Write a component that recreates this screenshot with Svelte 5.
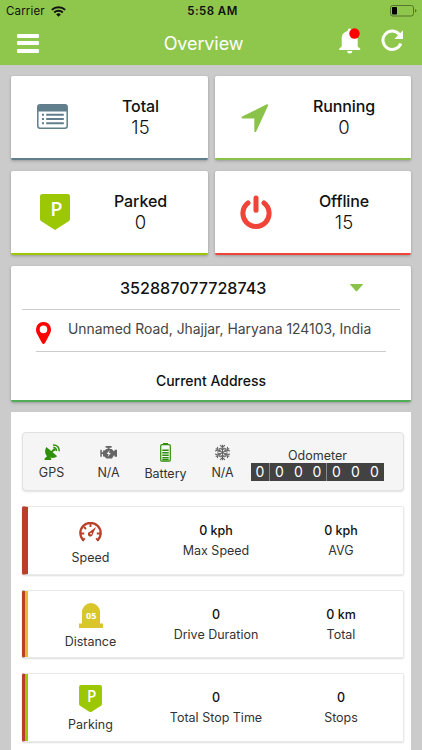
<script lang="ts">
	const tiles = [
		{ icon: 'list', label: 'Total', value: 15, tone: 'slate' },
		{ icon: 'arrow', label: 'Running', value: 0, tone: 'green' },
		{ icon: 'parking', label: 'Parked', value: 0, tone: 'lime' },
		{ icon: 'power', label: 'Offline', value: 15, tone: 'red' }
	];

	const sensors = [
		{ icon: 'gps', label: 'GPS' },
		{ icon: 'engine', label: 'N/A' },
		{ icon: 'battery', label: 'Battery' },
		{ icon: 'snow', label: 'N/A' }
	];

	const odometer = [0, 0, 0, 0, 0, 0, 0];

	const stats = [
		{
			icon: 'speed',
			label: 'Speed',
			values: [
				{ value: '0 kph', label: 'Max Speed' },
				{ value: '0 kph', label: 'AVG' }
			]
		},
		{
			icon: 'distance',
			label: 'Distance',
			values: [
				{ value: '0', label: 'Drive Duration' },
				{ value: '0 km', label: 'Total' }
			]
		},
		{
			icon: 'parking',
			label: 'Parking',
			values: [
				{ value: '0', label: 'Total Stop Time' },
				{ value: '0', label: 'Stops' }
			]
		}
	];
</script>

{#snippet parkingSign(width: number, height: number)}
	<svg {width} {height} viewBox="0 0 30 36">
		<path d="M2.5 0h25A2.5 2.5 0 0130 2.500V25q0 1.500-1.300 2.300L15 36 1.300 27.300Q0 26.500 0 25V2.500A2.500 2.500 0 012.500 0z" fill="#9bc704" />
		<text x="16.500" y="22" text-anchor="middle" class="sign-letter">P</text>
	</svg>
{/snippet}

<div class="app">
	<header>
		<div class="status-bar">
			<div class="carrier">
				<span>Carrier</span>
				<!-- WiFi -->
				<svg width="15" height="11" viewBox="0 0 15 11" fill="none" stroke="#111">
					<path d="M.8 3.900a9.600 9.600 0 0113.400 0" stroke-width="2" />
					<path d="M3.200 6.500a6.200 6.200 0 018.600 0" stroke-width="1.900" />
					<path d="M7.500 10.800L5.200 8.400a3.300 3.300 0 014.600 0z" fill="#111" stroke="none" />
				</svg>
			</div>
			<span class="clock">5:58 AM</span>
			<!-- Battery -->
			<svg class="charge" width="27" height="12" viewBox="0 0 27 12">
				<rect x="0.500" y="0.500" width="23" height="10.500" rx="2.300" fill="none" stroke="#55752f" />
				<rect x="2" y="2" width="5" height="7.500" rx="0.800" fill="#000" />
				<path d="M25 4v3.600q1.500-.5 1.500-1.800T25 4z" fill="#55752f" />
			</svg>
		</div>
		<div class="nav-bar">
			<button class="menu" aria-label="Menu">
				<span></span>
				<span></span>
				<span></span>
			</button>
			<h1>Overview</h1>
			<div class="actions">
				<!-- Bell -->
				<svg width="22" height="26" viewBox="0 0 22 26">
					<path
						d="M8.700 3V2.500a2 2 0 014 0V3c3.600.8 6 3.500 6 7.300v8.200l2.500 2.300v1.200H.2v-1.200l2.500-2.300v-8.200c0-3.800 2.400-6.500 6-7.300zM8.200 23h5a2.500 2.500 0 01-5 0z"
						fill="#fff"
					/>
					<circle cx="15.500" cy="5.500" r="5.200" fill="#f00" />
				</svg>
				<!-- Refresh -->
				<svg width="23" height="23" viewBox="0 0 23 23">
					<path d="M18.200 5.300A9.200 9.200 0 1019.800 14.500" fill="none" stroke="#fff" stroke-width="3" />
					<path d="M22 1.200V10h-8.600z" fill="#fff" />
				</svg>
			</div>
		</div>
	</header>

	<main>
		<section class="tiles">
			{#each tiles as tile}
				<article class="tile {tile.tone}">
					<div class="tile-icon">
						{#if tile.icon === 'list'}
							<svg width="31" height="25" viewBox="0 0 31 25">
								<rect x="0.800" y="0.800" width="29.400" height="23.400" rx="2.200" fill="#fff" stroke="#617e8d" stroke-width="1.500" />
								<path d="M1 7.500V3q0-2 2-2h25q2 0 2 2v4.500z" fill="#617e8d" />
								<path d="M5 10.800h2M9.200 10.800h17.600M5 15h2M9.200 15h17.600M5 19.200h2M9.200 19.200h17.600" stroke="#617e8d" stroke-width="2" />
							</svg>
						{:else if tile.icon === 'arrow'}
							<svg width="29" height="29" viewBox="0 0 29 29">
								<path d="M1.600 14.500L26.200 2.200 14.300 28v-13.500z" fill="#8bc34a" stroke="#8bc34a" stroke-width="2" stroke-linejoin="round" />
							</svg>
						{:else if tile.icon === 'parking'}
							{@render parkingSign(30, 36)}
						{:else}
							<svg width="32" height="34" viewBox="0 0 32 34" fill="none" stroke="#f04438" stroke-width="5" stroke-linecap="round">
								<path d="M8 8a13.100 13.100 0 1016 0" />
								<path d="M16 3v12.300" />
							</svg>
						{/if}
					</div>
					<div class="tile-text">
						<strong>{tile.label}</strong>
						<span>{tile.value}</span>
					</div>
				</article>
			{/each}
		</section>

		<section class="address-card">
			<div class="device">
				<span>352887077728743</span>
				<svg width="13" height="8" viewBox="0 0 13 8">
					<path d="M.5 0h12q.8.3 0 1L7.200 7q-.7.700-1.400 0L.5 1q-.8-.7 0-1z" fill="#8bc34a" />
				</svg>
			</div>
			<div class="address">
				<svg width="15" height="22" viewBox="0 0 15 22">
					<path
						d="M7.500 0A7.300 7.300 0 0115 7.400c0 2.200-.8 3.800-1.700 5.600L9 21q-1.500 2-3 0L1.700 13C.8 11.200 0 9.600 0 7.400A7.300 7.300 0 017.500 0zm0 3.600a3.800 3.800 0 100 7.600 3.800 3.800 0 000-7.600z"
						fill="#f00"
						fill-rule="evenodd"
					/>
				</svg>
				<span>Unnamed Road, Jhajjar, Haryana 124103, India</span>
			</div>
			<div class="caption">Current Address</div>
		</section>

		<section class="details">
			<div class="sensors">
				{#each sensors as sensor}
					<div class="sensor" class:battery={sensor.icon === 'battery'}>
						<div class="sensor-icon">
							{#if sensor.icon === 'gps'}
								<svg width="16" height="17" viewBox="0 0 16 17">
									<path d="M2.300 3Q-.5 8.500 3 12.300L.6 14.600V16h6.600v-1.400l-1.300-1.200q4.300 1.400 7.300-1.200L8.700 8.200l1.900-2-1.300-1.200-2 2z" fill="#2f8f0b" />
									<path d="M9.300 3.600q3.200.2 3.100 3.500M9 .9q6.300-.1 6.200 6.300" fill="none" stroke="#2f8f0b" stroke-width="1.500" />
									<circle cx="9.900" cy="5.900" r="1.200" fill="#2f8f0b" />
								</svg>
							{:else if sensor.icon === 'engine'}
								<svg width="17" height="13" viewBox="0 0 17 13">
									<path d="M5.600 0h6v1.700h-2V3h2.200l1.800 2h1v-1.200H17v7h-2.400V9.500h-.8L12 12.500H6.500L4.300 10.500H3V8H1.800v2.700H.3v-7h1.500v2.600H3V4.500h1.500L6.200 3h1.400V1.700h-2z" fill="#666" />
									<path d="M9.500 4.300L6.600 8h2L7.700 11l3.100-4H9z" fill="#f5f5f5" />
								</svg>
							{:else if sensor.icon === 'battery'}
								<svg width="11" height="19" viewBox="0 0 11 19">
									<path d="M3 0h5v2H3z" fill="#2f8f0b" />
									<rect x="0.700" y="1.700" width="9.600" height="16.500" rx="1.300" fill="none" stroke="#2f8f0b" stroke-width="1.200" />
									<path d="M2.300 7.200h6.400M2.300 9.700h6.400M2.300 12.200h6.400M2.300 14.700h6.400M2.300 16.700h6.400" stroke="#2f8f0b" stroke-width="1.600" />
								</svg>
							{:else}
								<svg width="17" height="17" viewBox="-8.500 -8.500 17 17" fill="none" stroke="#666" stroke-width="1.100">
									{#each [0, 60, 120, 180, 240, 300] as angle}
										<path d="M0 0V-7.800M-2.400-7.300L0-5l2.400-2.300M-2.200-4.700L0-2.600l2.200-2.100" transform="rotate({angle})" />
									{/each}
								</svg>
							{/if}
						</div>
						<span>{sensor.label}</span>
					</div>
				{/each}
				<div class="odometer">
					<span>Odometer</span>
					<div class="digits">
						{#each odometer as digit}
							<b>{digit}</b>
						{/each}
					</div>
				</div>
			</div>

			{#each stats as stat}
				<article class="stat {stat.icon}">
					<div class="stat-head">
						<div class="stat-icon">
							{#if stat.icon === 'speed'}
								<svg width="23" height="20" viewBox="0 0 23 20" fill="none" stroke="#b83f2a">
									<path d="M4.300 18.300A10.200 10.200 0 1118.700 18.300" stroke-width="2.200" />
									<path
										d="M2 11.500h3.200M21 11.500h-3.200M11.500 2v3M5 5l2 2M5.800 16.200L3.700 19M17.200 16.200l2.100 2.800"
										stroke-width="1.900"
									/>
									<path d="M17 5l-3.200 7a2.500 2.500 0 11-3.100-2.300z" fill="#b83f2a" stroke="none" />
									<circle cx="12" cy="11.600" r="0.900" fill="#fff" stroke="none" />
								</svg>
							{:else if stat.icon === 'distance'}
								<svg width="24" height="25" viewBox="0 0 24 25">
									<path d="M3 20.500V9a9 9 0 0118 0v11.500h3V25H0v-4.500z" fill="#d8c62b" />
									<text x="12.200" y="15.500" text-anchor="middle" class="marker-number">05</text>
								</svg>
							{:else}
								{@render parkingSign(23, 27.500)}
							{/if}
						</div>
						<span>{stat.label}</span>
					</div>
					{#each stat.values as item}
						<div class="stat-value">
							<strong>{item.value}</strong>
							<span>{item.label}</span>
						</div>
					{/each}
				</article>
			{/each}
		</section>
	</main>
</div>

<style>
	:global(body) {
		margin: 0;
		overflow: hidden;
	}

	.app {
		width: 422px;
		height: 750px;
		overflow: hidden;
		background: #cbcbcb;
		color: #111;
		font-family: Inter, 'Liberation Sans', sans-serif;
	}

	svg {
		display: block;
		flex-shrink: 0;
	}

	header {
		height: 65px;
		background: #8fc74c;
	}

	/* Status bar */
	.status-bar {
		display: grid;
		grid-template-columns: 1fr auto 1fr;
		align-items: center;
		height: 22px;
		padding: 0 5px 0 6px;
		font-size: 11.5px;
		line-height: 22px;
	}

	.carrier {
		display: flex;
		align-items: center;
		gap: 6px;
		letter-spacing: 0.15px;
	}

	.clock {
		padding-left: 2px;
		font-weight: 600;
		letter-spacing: 0.45px;
	}

	.charge {
		justify-self: end;
	}

	/* Title bar */
	.nav-bar {
		display: grid;
		grid-template-columns: 1fr auto 1fr;
		align-items: center;
		height: 42px;
		padding: 0 18px 0 17px;
	}

	.menu {
		display: flex;
		flex-direction: column;
		gap: 3.5px;
		width: 22px;
		padding: 0;
		border: none;
		background: none;
	}

	.menu span {
		height: 4px;
		border-radius: 1px;
		background: #fff;
	}

	h1 {
		margin: 0 14px 0 0;
		color: #fff;
		font-size: 18px;
		font-weight: 400;
		letter-spacing: -0.1px;
	}

	.actions {
		display: flex;
		justify-content: flex-end;
		gap: 20px;
		height: 26px;
		margin-top: -4px;
	}

	.actions svg:last-child {
		margin-top: 1px;
	}

	main {
		display: flex;
		flex-direction: column;
		gap: 10px;
		padding: 11px 11px 0;
	}

	/* Summary tiles */
	.tiles {
		display: grid;
		grid-template-columns: 1fr 1fr;
		gap: 11px 7px;
	}

	.tile,
	.address-card {
		box-sizing: border-box;
		border-radius: 2px;
		background: #fff;
		box-shadow: 0 1px 3px rgba(0, 0, 0, 0.25);
	}

	.tile {
		display: grid;
		grid-template-columns: 82px 95px;
		align-items: center;
		height: 84px;
		border-bottom: 2px solid;
	}

	.tile.slate {
		border-color: #617e8d;
	}

	.tile.green {
		border-color: #8bc34a;
	}

	.tile.lime {
		border-color: #9bc704;
	}

	.tile.red {
		border-color: #f04438;
	}

	.tile-icon {
		display: flex;
		justify-content: center;
	}

	.slate .tile-icon {
		padding-bottom: 2px;
	}

	.lime .tile-icon {
		padding-left: 5px;
	}

	.sign-letter {
		fill: #fff;
		font: 600 20px 'Open Sans', sans-serif;
	}

	.marker-number {
		fill: #fff;
		font: 700 9px 'Open Sans', sans-serif;
	}

	.tile-text {
		display: flex;
		flex-direction: column;
		align-items: center;
		line-height: 21px;
	}

	.tile-text strong {
		font-size: 16px;
		font-weight: 500;
		letter-spacing: -0.1px;
	}

	.tile-text span {
		font-size: 18.5px;
		font-weight: 300;
	}

	/* Address */
	.address-card {
		display: flex;
		flex-direction: column;
		height: 136px;
		margin-top: 1px;
		padding: 0 11px;
		border-bottom: 2px solid #50ad55;
	}

	.device {
		display: flex;
		align-items: center;
		gap: 84px;
		height: 43px;
		padding-left: 98px;
		border-bottom: 1px solid #ccc;
		font-size: 16.1px;
		font-weight: 500;
	}

	.address {
		display: flex;
		gap: 17px;
		height: 29px;
		margin: 0 14px;
		padding-top: 12px;
		border-bottom: 1px solid #ccc;
		color: #444;
		font-size: 13.9px;
		line-height: 15px;
		white-space: nowrap;
	}

	.caption {
		padding-top: 20px;
		font-size: 14px;
		font-weight: 500;
		line-height: 18px;
		text-align: center;
	}

	/* Tracker details */
	.details {
		display: flex;
		flex-direction: column;
		gap: 15px;
		height: 360px;
		padding: 20px 7px 0 11px;
		background: #fff;
		color: #333;
	}

	.sensors {
		display: flex;
		box-sizing: border-box;
		height: 59px;
		border: 1px solid #e2e2e2;
		border-radius: 4px;
		background: #f5f5f5;
		box-shadow: 0 1px 2px rgba(0, 0, 0, 0.12);
		font-size: 12.5px;
		line-height: 15px;
	}

	.sensor {
		display: flex;
		flex-direction: column;
		align-items: center;
		width: 57px;
		padding-top: 10px;
	}

	.sensor-icon {
		display: flex;
		align-items: center;
		height: 18px;
		margin-bottom: 4px;
	}

	.battery .sensor-icon {
		margin-bottom: 5px;
	}

	.odometer {
		display: flex;
		flex-direction: column;
		align-items: center;
		padding-top: 15px;
	}

	.digits {
		display: flex;
		background: #424242;
		color: #fff;
	}

	.digits b {
		box-sizing: border-box;
		width: 19px;
		height: 18px;
		font-size: 14px;
		font-weight: 400;
		line-height: 17px;
		text-align: center;
	}

	.digits b:nth-child(3n + 1):not(:last-child) {
		border-right: 1px solid #8a8a8a;
	}

	.stat {
		display: grid;
		grid-template-columns: 125px 126px 1fr;
		box-sizing: border-box;
		height: 68.5px;
		border: 1px solid #e9e9e9;
		border-left: 6px solid #b83f2a;
		border-radius: 2px;
		box-shadow: 0 1px 2px rgba(0, 0, 0, 0.14);
		font-size: 12.5px;
		line-height: 20px;
	}

	/* Two-tone edge: the second stripe sits on the first column */
	.stat.distance,
	.stat.parking {
		grid-template-columns: 128px 126px 1fr;
		border-left-width: 3px;
	}

	.stat.distance .stat-head {
		border-left: 3px solid #dfbd35;
	}

	.stat.parking .stat-head {
		border-left: 3px solid #9bc704;
	}

	.stat-head,
	.stat-value {
		display: flex;
		flex-direction: column;
		align-items: center;
	}

	.stat-icon {
		display: flex;
		align-items: center;
		height: 29px;
		margin: 10px 0 2px;
	}

	.stat-value {
		padding-top: 14px;
	}

	.stat-value strong {
		color: #111;
		font-weight: 500;
	}
</style>
